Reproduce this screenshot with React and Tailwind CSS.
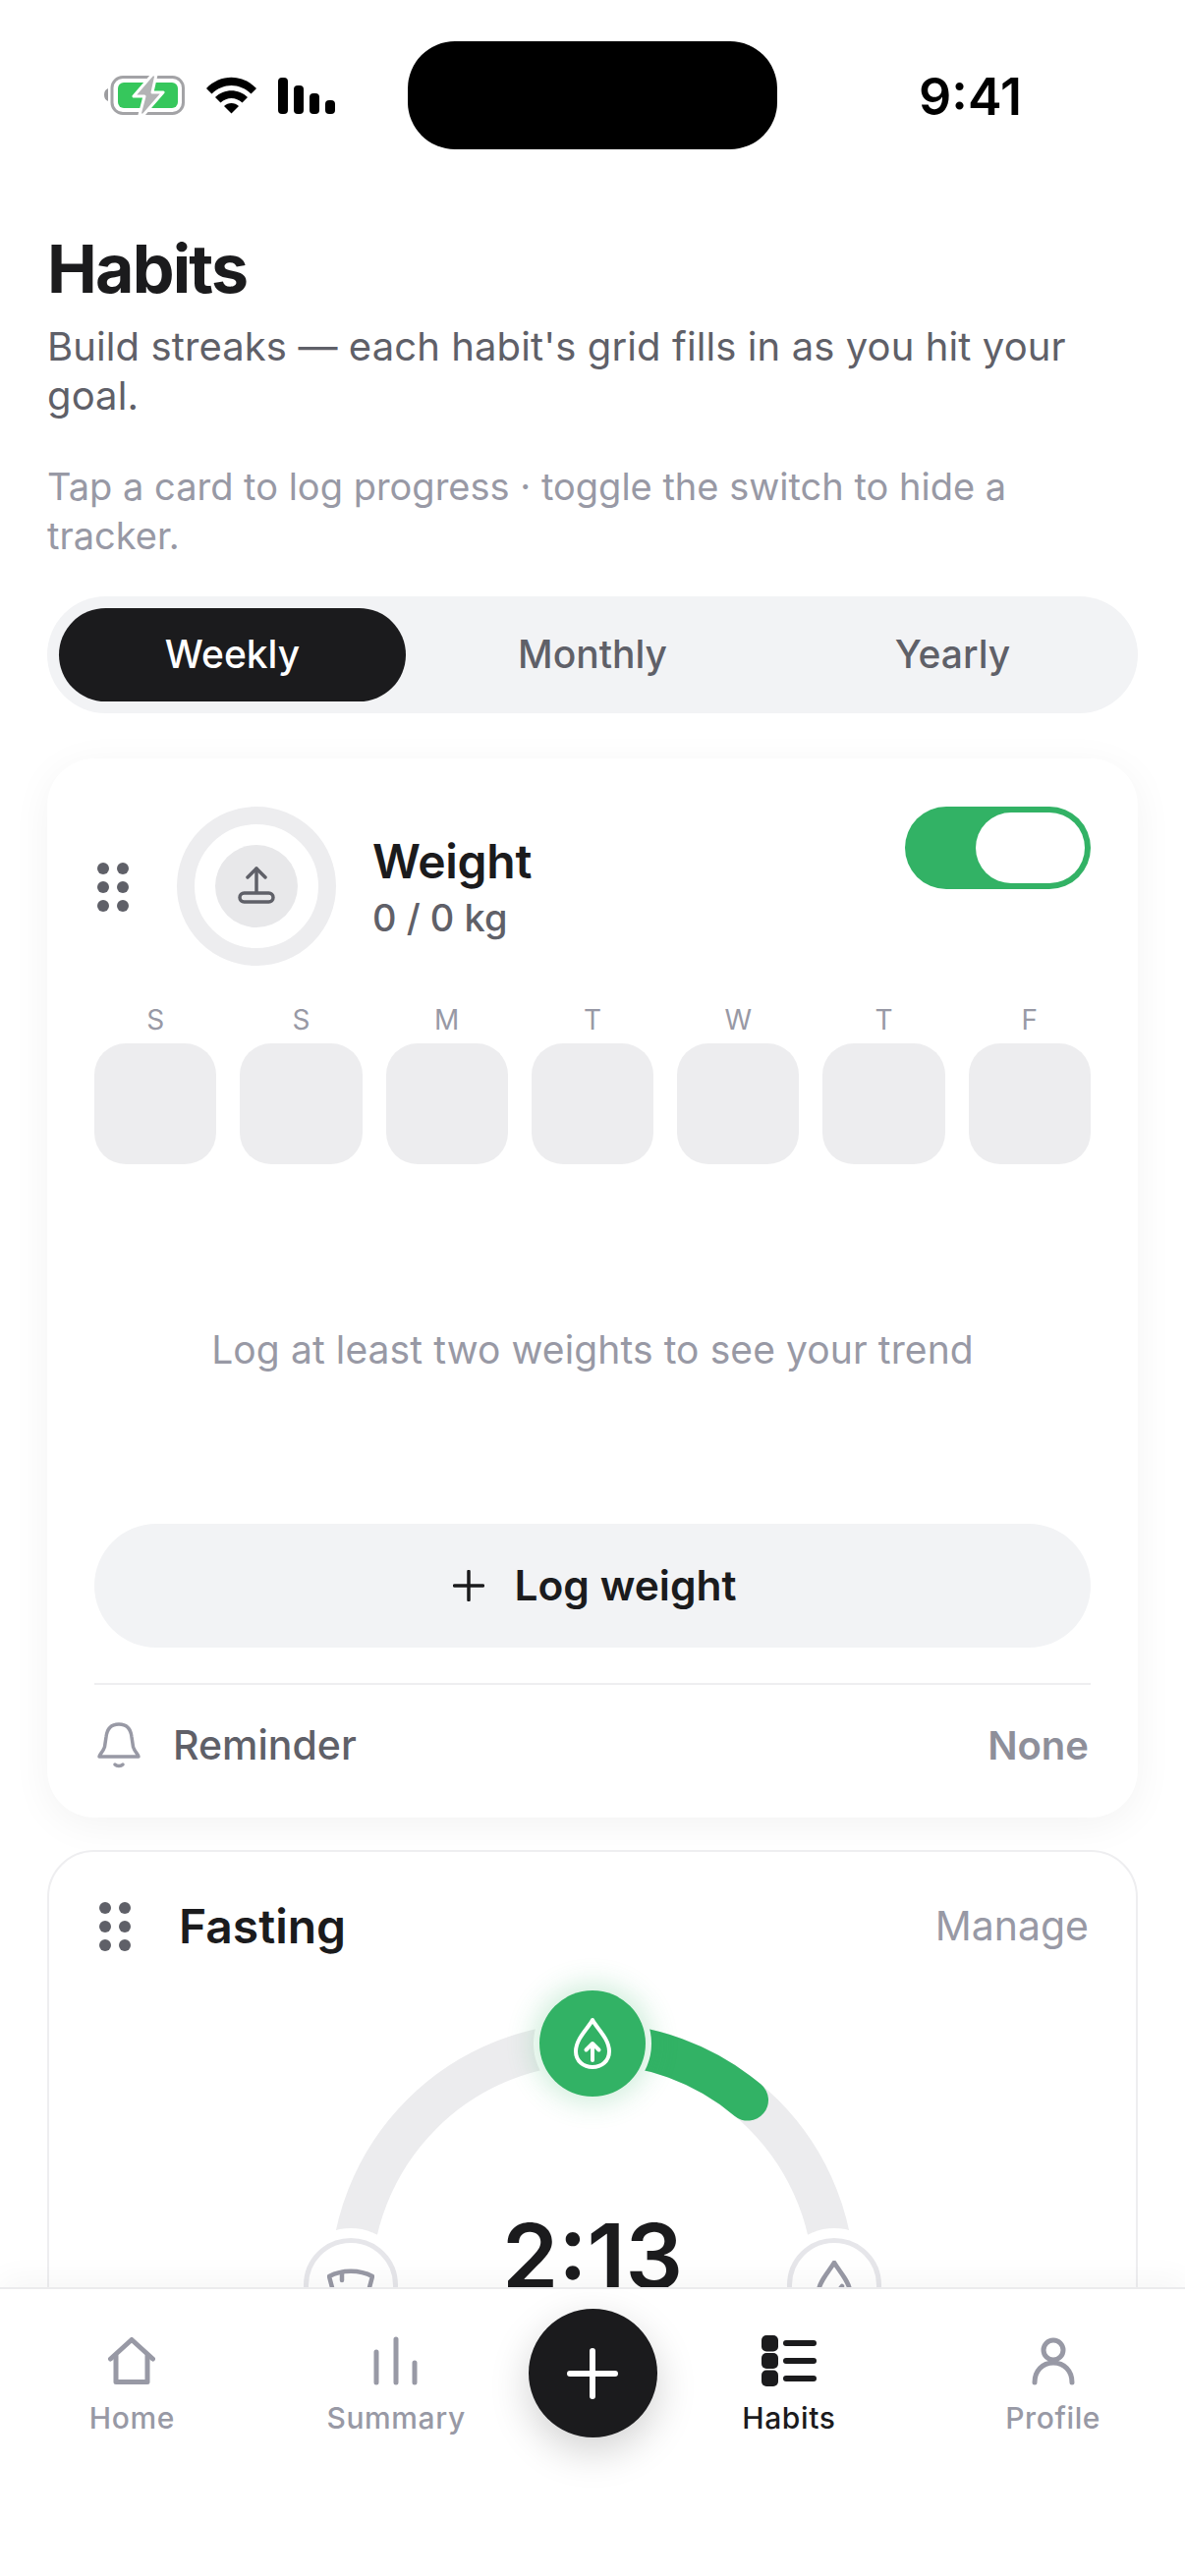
import React from "react";

const Dots = () => (
  <div className="grid grid-cols-2 w-[32px] gap-x-[8px] gap-y-[7px]">
    {[0, 1, 2, 3, 4, 5].map((i) => (
      <span key={i} className="w-[12px] h-[12px] rounded-full bg-[#5f6068]" />
    ))}
  </div>
);

const StatusIcons = () => (
  <div className="flex items-center gap-[22px] h-[40px]">
    <svg width="82" height="40" viewBox="0 0 82 40" className="shrink-0">
      <path d="M4 13 C1.5 14 0 16 0 19.500 C0 23 1.500 25 4 26 Z" fill="#9c9c9f" />
      <rect x="8" y="1.500" width="72.500" height="37" rx="11" fill="#fff" stroke="#a3a3a6" strokeWidth="3" />
      <rect x="14" y="7" width="61" height="26" rx="6" fill="#36c75c" />
      <path d="M49 -1 L30 21 H41 L36 40 H40 L60 17 H49 L53 -1 Z" fill="#b3b3b5" stroke="#fff" strokeWidth="3" strokeLinejoin="round" />
    </svg>
    <svg width="51" height="38" viewBox="0 0 51 38" className="shrink-0">
      <path d="M0 12 C14 -3 37 -3 51 12 L45.500 17.500 C34 6 17 6 5.500 17.500 Z" fill="#000" />
      <path d="M9 21 C18 12 33 12 42 21 L36.500 26.500 C30 20.500 21 20.500 14.500 26.500 Z" fill="#000" />
      <path d="M18 30 C22 26 29 26 33 30 L25.500 37.500 Z" fill="#000" />
    </svg>
    <div className="flex items-end gap-[6px] h-[37px]">
      <span className="w-[10px] h-[37px] rounded-[4px] bg-black" />
      <span className="w-[10px] h-[29px] rounded-[4px] bg-black" />
      <span className="w-[10px] h-[21px] rounded-[4px] bg-black" />
      <span className="w-[10px] h-[14px] rounded-[4px] bg-black" />
    </div>
  </div>
);

const days = ["S", "S", "M", "T", "W", "T", "F"];

const NavItem = ({ icon, label, active }) => (
  <div className="flex-1 flex flex-col items-center pt-[47px]">
    <div className="h-[52px] flex items-center justify-center">{icon}</div>
    <span
      className={
        "mt-[12px] text-[30px] leading-[40px] font-medium tracking-[0.6px] " +
        (active ? "text-[#1b1b1d]" : "text-[#9899a5]")
      }
    >
      {label}
    </span>
  </div>
);

export default function App() {
  return (
    <div className="w-[1206px] h-[2622px] bg-white flex flex-col overflow-hidden [font-family:Inter,sans-serif] text-[#1b1b1d]">
      <main className="flex-1 min-h-0 overflow-hidden flex flex-col">
        <div className="flex h-[194px] shrink-0">
          <div className="w-[415px] pl-[106px] pt-[77px]">
            <StatusIcons />
          </div>
          <div className="w-[376px] h-[110px] mt-[42px] rounded-[48px] bg-black" />
          <div className="flex-1 pr-[22px] pt-[68px] text-center text-[52px] leading-[62px] font-semibold text-black">
            9:41
          </div>
        </div>

        <div className="px-[48px] flex flex-col shrink-0">
          <h1 className="text-[68px] leading-[76px] font-bold tracking-[-1.8px] mt-[41px]">Habits</h1>
          <p className="mt-[17px] text-[40px] leading-[50px] tracking-[0.1px] text-[#5f6068]">
            Build streaks — each habit's grid fills in as you hit your goal.
          </p>
          <p className="mt-[42px] text-[38px] leading-[50px] text-[#9899a5]">
            Tap a card to log progress · toggle the switch to hide a tracker.
          </p>

          <div className="mt-[37px] h-[119px] rounded-full bg-[#f2f3f5] p-[12px] flex">
            <div className="w-[353px] rounded-full bg-[#1b1b1d] text-white flex items-center justify-center text-[39px] font-medium">
              Weekly
            </div>
            <div className="w-[380px] flex items-center justify-center text-[39px] font-medium text-[#5f6068]">
              Monthly
            </div>
            <div className="flex-1 flex items-center justify-center text-[39px] font-medium text-[#5f6068]">
              Yearly
            </div>
          </div>

          <section className="mt-[46px] rounded-[48px] bg-white shadow-[0_8px_40px_rgba(0,0,0,0.05)] pl-[48px] pr-[48px] pt-[49px] h-[1078px] flex flex-col">
            <div className="flex h-[162px]">
              <div className="ml-[3px] w-[32px] self-center mt-[2px]">
                <Dots />
              </div>
              <div className="ml-[49px] w-[162px] h-[162px] rounded-full border-[18px] border-[#ededef] flex items-center justify-center">
                <div className="w-[84px] h-[84px] rounded-full bg-[#e8e8ea] flex items-center justify-center">
                  <svg width="40" height="40" viewBox="0 0 40 40" fill="none" stroke="#5f6068" strokeWidth="3.500" strokeLinecap="round" strokeLinejoin="round">
                    <path d="M20 2 V26" />
                    <path d="M11 11 L20 2 L29 11" />
                    <rect x="3" y="27" width="34" height="9" rx="4.500" />
                  </svg>
                </div>
              </div>
              <div className="ml-[37px] flex flex-col pt-[27px]">
                <span className="text-[48px] leading-[58px] font-semibold tracking-[-0.3px]">Weight</span>
                <span className="text-[38px] leading-[50px] font-medium text-[#5f6068] mt-[3px]">0 / 0 kg</span>
              </div>
              <div className="ml-auto w-[189px] h-[84px] rounded-full bg-[#32b265] p-[6px] flex justify-end">
                <div className="w-[111px] h-[72px] rounded-full bg-white" />
              </div>
            </div>

            <div className="mt-[38px] grid grid-cols-7 gap-x-[24px]">
              {days.map((d, i) => (
                <div key={i} className="flex flex-col items-center">
                  <span className="text-[28px] leading-[34px] text-[#9899a5]">{d}</span>
                  <div className="mt-[7px] w-full h-[123px] rounded-[32px] bg-[#ededef]" />
                </div>
              ))}
            </div>

            <div className="mt-[164px] text-center text-[39px] leading-[50px] tracking-[0.1px] text-[#9899a5]">
              Log at least two weights to see your trend
            </div>

            <button className="mt-[152px] h-[126px] rounded-full bg-[#f2f3f5] flex items-center justify-center gap-[30px] pl-[5px] text-[42.500px] font-semibold shrink-0">
              <svg width="32" height="32" viewBox="0 0 32 32" stroke="#1b1b1d" strokeWidth="3.500" strokeLinecap="round">
                <path d="M16 1.500 V30.500 M1.500 16 H30.500" />
              </svg>
              Log weight
            </button>

            <div className="mt-[36px] border-t-2 border-[#eeeef0] flex items-center justify-between h-[126px] pr-[2px]">
              <div className="flex items-center">
                <svg width="44" height="48" viewBox="0 0 44 48" fill="none" stroke="#9899a5" strokeWidth="3.500" strokeLinecap="round" strokeLinejoin="round" className="ml-[3px]">
                  <path d="M2 35 C2 33 6 30 7.500 25 L9 15 C10 6 15 2 22 2 C29 2 34 6 35 15 L36.500 25 C38 30 42 33 42 35 Z" />
                  <path d="M18 43 C20 45 24 45 26 43" />
                </svg>
                <span className="ml-[33px] text-[41px] font-medium text-[#5f6068]">Reminder</span>
              </div>
              <span className="text-[40px] font-semibold text-[#8e8f9a]">None</span>
            </div>
          </section>

          <section className="mt-[33px] rounded-[48px] bg-white border-2 border-[#eeeef0] px-[45px] h-[600px]">
            <div className="flex items-center h-[152px] pr-[3px]">
              <div className="ml-[6px] w-[32px]">
                <Dots />
              </div>
              <span className="ml-[49px] text-[48px] font-semibold">Fasting</span>
              <span className="ml-auto text-[41px] text-[#9899a5]">Manage</span>
            </div>
            <div className="relative w-[600px] h-[400px] mx-auto -mt-[21px]">
              <svg width="600" height="400" viewBox="0 0 600 400" fill="none" className="absolute inset-0">
                <path d="M54 310 A246 246 0 0 1 546 310" stroke="#ececee" strokeWidth="42" />
                <path d="M300 64 A246 246 0 0 1 458 121.600" stroke="#32b265" strokeWidth="42" strokeLinecap="round" />
              </svg>

              <div className="absolute left-[246px] top-[10px] w-[108px] h-[108px] rounded-full bg-[#32b265] shadow-[0_0_28px_6px_rgba(50,178,101,0.24),0_0_0_6px_#ffffff] flex items-center justify-center">
                <svg width="40" height="54" viewBox="0 0 40 54" fill="none" stroke="#fff" strokeWidth="4" strokeLinecap="round" strokeLinejoin="round">
                  <path d="M20 3 C16 11 3 22 3 35 C3 45 11 51 20 51 C29 51 37 45 37 35 C37 22 24 11 20 3 Z" />
                  <path d="M20 44 V28 M13.500 33.500 L20 27 L26.500 33.500" />
                </svg>
              </div>

              <div className="absolute left-[6px] top-[262px] w-[96px] h-[96px] rounded-full bg-white border-[5px] border-[#e6e6ea] shadow-[0_0_0_10px_#ffffff] flex justify-center pt-[26px]">
                <svg width="48" height="50" viewBox="0 0 48 50" fill="none" stroke="#9899a5" strokeWidth="4.500" strokeLinecap="round" strokeLinejoin="round" className="shrink-0">
                  <path d="M2 8 C15 1 33 1 46 8 L37 42 H11 Z" />
                  <path d="M15 4 V12" />
                </svg>
              </div>

              <div className="absolute left-[498px] top-[262px] w-[96px] h-[96px] rounded-full bg-white border-[5px] border-[#e6e6ea] shadow-[0_0_0_10px_#ffffff] flex justify-center pt-[18px]">
                <svg width="36" height="52" viewBox="0 0 36 52" fill="none" stroke="#9899a5" strokeWidth="4.500" strokeLinecap="round" strokeLinejoin="round" className="shrink-0">
                  <path d="M18 2 C12 12 2 22 2 32 C2 42 10 48 18 48 C26 48 34 42 34 32 C34 22 24 12 18 2 Z" />
                  <path d="M26 26 L18 36" />
                </svg>
              </div>

              <div className="absolute inset-x-0 top-[228px] text-center text-[92px] leading-[106px] font-semibold">
                2:13
              </div>
            </div>
          </section>
        </div>
      </main>

      <nav className="relative z-10 h-[294px] shrink-0 bg-white border-t-2 border-[#ebebed] shadow-[0_-8px_30px_rgba(0,0,0,0.04)] flex">
        <NavItem
          label="Home"
          icon={
            <svg width="48" height="48" viewBox="0 0 48 48" fill="none" stroke="#9899a5" strokeWidth="5" strokeLinecap="round" strokeLinejoin="round">
              <path d="M2.500 22 L24 2.500 L45.500 22" />
              <path d="M8 19 V45.500 H40 V19" />
            </svg>
          }
        />
        <NavItem
          label="Summary"
          icon={
            <svg width="48" height="50" viewBox="0 0 48 50" fill="none" stroke="#9899a5" strokeWidth="5" strokeLinecap="round">
              <path d="M4 16 V47 M24 3 V47 M43 27 V47" />
            </svg>
          }
        />
        <div className="w-[131px] shrink-0 pt-[20px]">
          <div className="w-[131px] h-[131px] rounded-full bg-[#1b1b1d] shadow-[0_14px_40px_rgba(0,0,0,0.18)] flex items-center justify-center">
            <svg width="52" height="52" viewBox="0 0 52 52" stroke="#fff" strokeWidth="6" strokeLinecap="round">
              <path d="M26 3 V49 M3 26 H49" />
            </svg>
          </div>
        </div>
        <NavItem
          active
          label="Habits"
          icon={
            <svg width="56" height="52" viewBox="0 0 56 52" fill="#1b1b1d">
              <rect x="0" y="0" width="17" height="16.500" rx="5" />
              <rect x="0" y="18" width="17" height="16" rx="5" />
              <rect x="0" y="35.500" width="17" height="16.500" rx="5" />
              <rect x="22" y="5" width="34" height="6" rx="3" />
              <rect x="22" y="23" width="34" height="6" rx="3" />
              <rect x="22" y="41" width="34" height="6" rx="3" />
            </svg>
          }
        />
        <NavItem
          label="Profile"
          icon={
            <svg width="44" height="50" viewBox="0 0 44 50" fill="none" stroke="#9899a5" strokeWidth="5" strokeLinecap="round">
              <circle cx="22" cy="14" r="10" />
              <path d="M3 47 C3 35 11 27 22 27 C33 27 41 35 41 47" />
            </svg>
          }
        />
      </nav>
    </div>
  );
}
